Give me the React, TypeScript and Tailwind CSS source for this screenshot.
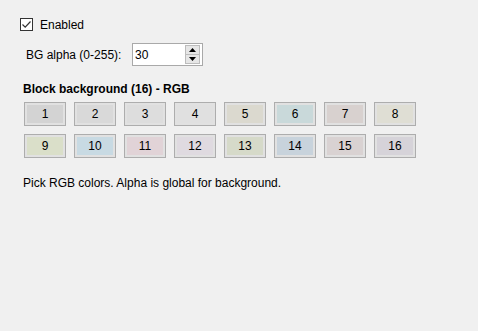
import { useState } from 'react'

const swatches = [
  'bg-[#d3d3d3]', 'bg-[#d9d9d9]', 'bg-[#dddddd]', 'bg-[#e0e0e0]',
  'bg-[#dbd9cf]', 'bg-[#c9d9da]', 'bg-[#d8d1cf]', 'bg-[#dfded4]',
  'bg-[#dadfc9]', 'bg-[#c8dae3]', 'bg-[#e1d3d7]', 'bg-[#dfdae0]',
  'bg-[#d6dac9]', 'bg-[#c8d3dc]', 'bg-[#d9d2d2]', 'bg-[#d6d3d9]',
]

export default function App() {
  const [enabled, setEnabled] = useState(true)
  const [alpha, setAlpha] = useState('30')

  return (
    <div className="w-[478px] h-[331px] bg-[#f0f0f0] text-black text-[12px] leading-none flex flex-col font-['Liberation_Sans',sans-serif]">
      {/* Enabled */}
      <label className="flex items-center ml-[20px] mt-[18px] h-[13px] gap-[7px]">
        <span
          className="w-[13px] h-[13px] border border-[#333333] bg-white flex items-center justify-center"
          onClick={() => setEnabled(!enabled)}
        >
          {enabled && (
            <svg width="11" height="11" viewBox="0 0 11 11">
              <path d="M1.5 5.5 L4.2 8.2 L9.5 2.5" fill="none" stroke="#333" strokeWidth="1.2" />
            </svg>
          )}
        </span>
        <span>Enabled</span>
      </label>

      {/* BG alpha */}
      <div className="flex items-center mt-[12px] h-[23px]">
        <span className="ml-[26px] w-[106px]">BG alpha (0-255):</span>
        <div className="w-[71px] h-[23px] border border-[#a9a9a9] bg-white flex items-stretch">
          <input
            value={alpha}
            onChange={(e) => setAlpha(e.target.value)}
            className="flex-1 min-w-0 outline-none bg-transparent pl-[2px] text-[12px] pt-[1px] font-['Liberation_Sans',sans-serif]"
          />
          <div className="w-[15px] mr-[2px] my-[1px] flex flex-col">
            <div className="flex-1 border border-[#bcbcbc] bg-[#e6e6e6] flex items-center justify-center">
              <svg width="7" height="4" viewBox="0 0 7 4">
                <path d="M0 4 L3.5 0 L7 4 Z" fill="#000" />
              </svg>
            </div>
            <div className="flex-1 border border-t-0 border-[#bcbcbc] bg-[#e6e6e6] flex items-center justify-center">
              <svg width="7" height="4" viewBox="0 0 7 4">
                <path d="M0 0 L3.5 4 L7 0 Z" fill="#000" />
              </svg>
            </div>
          </div>
        </div>
      </div>

      {/* Header */}
      <div className="ml-[23px] mt-[17px] font-bold">Block background (16) - RGB</div>

      {/* Swatch grid */}
      <div className="ml-[24px] mt-[7px] grid grid-cols-[repeat(8,42px)] gap-[8px]">
        {swatches.map((c, i) => (
          <button key={i} className="h-[24px] border border-[#adadad] bg-[#e1e1e1] p-[2px] flex">
            <span className={`flex-1 flex items-center justify-center ${c}`}>{i + 1}</span>
          </button>
        ))}
      </div>

      <div className="ml-[23px] mt-[19px]">Pick RGB colors. Alpha is global for background.</div>
    </div>
  )
}
